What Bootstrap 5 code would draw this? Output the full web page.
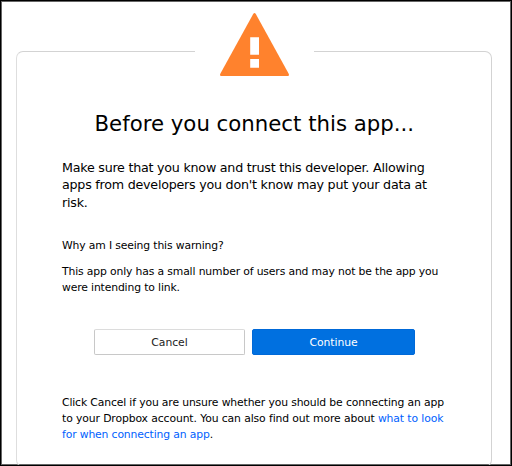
<!DOCTYPE html>
<html lang="en">
<head>
<meta charset="utf-8">
<meta name="viewport" content="width=device-width, initial-scale=1">
<title>Before you connect this app...</title>
<link href="https://cdn.jsdelivr.net/npm/bootstrap@5.3.0/dist/css/bootstrap.min.css" rel="stylesheet">
<style>
body { font-family: "DejaVu Sans", sans-serif; font-size: 10.8px; line-height: 16px; color: #000; letter-spacing: -.14px; }
.frame { height: 466px; border: 1px solid #000; box-shadow: inset 0 0 0 1px #666; padding: 50px 19px 0 15px; }
.panel { height: 416px; border: 1px solid #d3d3d3; border-left-color: #dedede; border-radius: 7px; padding: 0 45px; }
.warn-sign { width: 119px; height: 66px; margin: -40px 0 0 133px; padding-left: 25px; background: #fff; }
.warn-sign svg { display: block; }
.title { font-size: 21.27px; line-height: 28px; margin: 32px 0 0 32.5px; font-weight: 400; letter-spacing: 0; }
.intro { font-size: 12.7px; line-height: 17.4px; margin: 21px 0 0; letter-spacing: -.24px; }
.why { margin: 26.3px 0 0; }
.reason { margin: 10px 0 0; }
.actions { margin: 33px 0 0 32px; gap: 7px; }
.actions .btn { height: 26px; padding: 0; border-radius: 2px; font-size: 10.8px; line-height: 25px; letter-spacing: -.05px; }
.btn-cancel { width: 151px; border: 1px solid #c8c8c8; border-top-color: #dcdcdc; color: #222; background: #fff; }
.btn-continue { width: 163px; border: 1px solid #0069d8; color: #fff; background: #0070e0; }
.help { margin: 40px 0 0; }
.help a { color: #0061fe; }
.ln { display: block; white-space: nowrap; }
.ln-open { letter-spacing: -.105px; }
</style>
<script src="https://cdn.jsdelivr.net/npm/bootstrap@5.3.0/dist/js/bootstrap.bundle.min.js" defer></script>
</head>
<body class="overflow-hidden bg-white">
<main class="frame overflow-hidden">
  <section class="panel">
    <div class="warn-sign">
      <svg width="69" height="66" viewBox="0 0 69 66" aria-hidden="true">
        <path d="M33.2 2.1 Q34.5 0 35.8 2.1 L68.7 61.7 Q69.6 64 67.7 64 H1.3 Q-.6 64 .3 61.7 Z" fill="#ff822d"/>
        <path d="M30.2 25.2h8.8v17.6h-8.8zM30.2 47h8.8v8.7h-8.8z" fill="#fff"/>
      </svg>
    </div>
    <h1 class="title text-nowrap">Before you connect this app...</h1>
    <p class="intro"><span class="ln">Make sure that you know and trust this developer. Allowing</span> <span class="ln">apps from developers you don't know may put your data at</span> <span class="ln">risk.</span></p>
    <p class="why">Why am I seeing this warning?</p>
    <p class="reason"><span class="ln">This app only has a small number of users and may not be the app you</span> <span class="ln">were intending to link.</span></p>
    <div class="actions d-flex">
      <button type="button" class="btn btn-cancel">Cancel</button>
      <button type="button" class="btn btn-continue">Continue</button>
    </div>
    <p class="help"><span class="ln">Click Cancel if you are unsure whether you should be connecting an app</span> <span class="ln ln-open">to your Dropbox account. You can also find out more about <a href="#" class="text-decoration-none">what to look</a></span> <span class="ln"><a href="#" class="text-decoration-none">for when connecting an app</a>.</span></p>
  </section>
</main>
</body>
</html>
